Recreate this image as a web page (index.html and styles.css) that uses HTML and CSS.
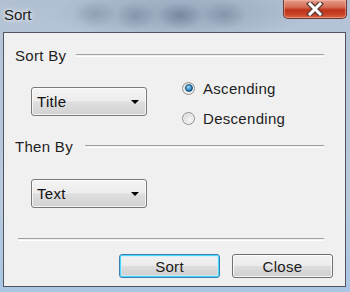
FILE: index.html
```html
<!DOCTYPE html>
<html>
<head>
<meta charset="utf-8">
<link rel="stylesheet" href="styles.css">
</head>
<body>
<div class="window">
  <div class="titlebar">
    <span class="title">Sort</span>
    <div class="close">
      <svg width="20" height="14" viewBox="0 0 20 14">
        <path d="M5 2 L15 12 M15 2 L5 12" stroke="#5a3a34" stroke-width="5.5" stroke-linecap="square"/>
        <path d="M5 2 L15 12 M15 2 L5 12" stroke="#ffffff" stroke-width="3" stroke-linecap="square"/>
      </svg>
    </div>
  </div>
  <div class="client">
    <div class="group-head head-sort">
      <span class="label">Sort By</span>
      <div class="groove"></div>
    </div>
    <div class="sort-row">
      <div class="combo"><span>Title</span><span class="arrow"></span></div>
      <div class="radios">
        <div class="radio-row"><span class="radio checked"></span><span class="label">Ascending</span></div>
        <div class="radio-row"><span class="radio"></span><span class="label">Descending</span></div>
      </div>
    </div>
    <div class="group-head head-then">
      <span class="label">Then By</span>
      <div class="groove"></div>
    </div>
    <div class="then-row">
      <div class="combo"><span>Text</span><span class="arrow"></span></div>
    </div>
    <div class="groove sep"></div>
    <div class="buttons">
      <div class="btn default">Sort</div>
      <div class="btn">Close</div>
    </div>
  </div>
</div>
</body>
</html>
```
FILE: styles.css
```css
html, body {
  margin: 0;
  padding: 0;
  background: #b7c7d8;
}
.window {
  position: relative;
  width: 350px;
  height: 292px;
  overflow: hidden;
  background:
    radial-gradient(ellipse 22px 14px at 95px 14px, rgba(60, 75, 100, 0.22), rgba(60, 75, 100, 0) 100%),
    radial-gradient(ellipse 20px 14px at 135px 16px, rgba(60, 75, 100, 0.25), rgba(60, 75, 100, 0) 100%),
    radial-gradient(ellipse 22px 14px at 180px 16px, rgba(50, 65, 95, 0.3), rgba(50, 65, 95, 0) 100%),
    radial-gradient(ellipse 22px 14px at 225px 15px, rgba(60, 75, 100, 0.25), rgba(60, 75, 100, 0) 100%),
    radial-gradient(ellipse 130px 28px at 180px 14px, rgba(80, 100, 130, 0.3), rgba(80, 100, 130, 0) 100%),
    linear-gradient(180deg, #b0bfd1 0px, #b5c4d6 32px, #b9cadc 200px, #a9c6e4 292px);
  font-family: "Liberation Sans", Arial, sans-serif;
  font-size: 15px;
  color: #000;
  display: flex;
  flex-direction: column;
}
.titlebar {
  height: 32px;
  display: flex;
  justify-content: space-between;
  align-items: flex-start;
}
.title {
  margin-left: 4px;
  margin-top: 6px;
  font-size: 15px;
  color: #1a1a1a;
  text-shadow: 0 0 6px rgba(255, 255, 255, 0.9), 0 0 3px rgba(255, 255, 255, 0.8);
}
.close {
  width: 62px;
  height: 18px;
  margin-right: 3px;
  border: 1px solid #6b3a33;
  border-top: none;
  border-radius: 0 0 5px 5px;
  background: linear-gradient(180deg, #e59c89 0%, #d46d55 40%, #bf3219 55%, #c94227 80%, #dc6545 100%);
  box-shadow: inset 0 0 0 1px rgba(255, 200, 190, 0.45);
  display: flex;
  align-items: center;
  justify-content: center;
}
.client {
  margin: 0 4px 5px 3px;
  height: 253px;
  border: 1px solid #4f5661;
  background: #f0f0f0;
  display: flex;
  flex-direction: column;
  letter-spacing: 0.3px;
}
.group-head {
  height: 17px;
  display: flex;
  align-items: center;
  padding-left: 11px;
  margin-right: 21px;
  color: #1e1e1e;
}
.head-sort { margin-top: 14px; }
.head-then { margin-top: 12px; }
.group-head .label { margin-right: 10px; }
.head-then .label { margin-right: 12px; }
.groove {
  flex: 1;
  height: 1px;
  border-top: 1px solid #a0a0a0;
  border-bottom: 1px solid #ffffff;
}
.sort-row {
  margin-top: 16px;
  height: 46px;
  display: flex;
  align-items: flex-start;
  padding-left: 27px;
}
.combo {
  height: 27px;
  margin-top: 7px;
  border: 1px solid #7a7a7a;
  border-radius: 3px;
  background: linear-gradient(180deg, #f4f4f4 0%, #ececec 48%, #dedede 52%, #d2d2d2 100%);
  box-shadow: inset 0 0 0 1px rgba(255, 255, 255, 0.7);
  display: flex;
  align-items: center;
  justify-content: space-between;
  padding: 0 7px 0 5px;
  box-sizing: content-box;
  width: 102px;
  color: #111;
}
.arrow {
  width: 0;
  height: 0;
  border-left: 4px solid transparent;
  border-right: 4px solid transparent;
  border-top: 4px solid #000;
  margin-top: 1px;
}
.radios {
  margin-left: 35px;
  display: flex;
  flex-direction: column;
  gap: 14px;
}
.radio-row {
  height: 16px;
  display: flex;
  align-items: center;
}
.radio {
  width: 11px;
  height: 11px;
  border-radius: 50%;
  border: 1px solid #8f8f8f;
  background: radial-gradient(circle at 60% 65%, #f6f6f6 0%, #e2e2e2 50%, #c9c9c9 100%);
  margin-right: 8px;
  display: flex;
  align-items: center;
  justify-content: center;
  box-shadow: inset 0 0 0 1px rgba(255, 255, 255, 0.6);
}
.radio.checked::after {
  content: "";
  width: 6px;
  height: 6px;
  border-radius: 50%;
  background: radial-gradient(circle at 40% 35%, #a8dcf8 0%, #2a87c4 55%, #15527f 100%);
  border: 1px solid #1a4f78;
}
.radio-row .label { color: #1e1e1e; }
.then-row {
  margin-top: 17px;
  padding-left: 27px;
  height: 36px;
}
.then-row .combo { margin-top: 7px; }
.sep {
  flex: none;
  margin: 30px 21px 0 14px;
}
.buttons {
  margin-top: 13px;
  display: flex;
  justify-content: flex-end;
  gap: 12px;
  padding-right: 12px;
}
.btn {
  width: 99px;
  height: 22px;
  border: 1px solid #707070;
  border-radius: 3px;
  background: linear-gradient(180deg, #f2f2f2 0%, #ebebeb 48%, #dddddd 52%, #cfcfcf 100%);
  box-shadow: inset 0 0 0 1px rgba(255, 255, 255, 0.8);
  display: flex;
  align-items: center;
  justify-content: center;
  color: #1a1a1a;
}
.btn.default {
  border-color: #3c7fb1;
  box-shadow: inset 0 0 0 1px #48d8fb, inset 0 0 0 2px rgba(200, 240, 255, 0.6);
}
```
